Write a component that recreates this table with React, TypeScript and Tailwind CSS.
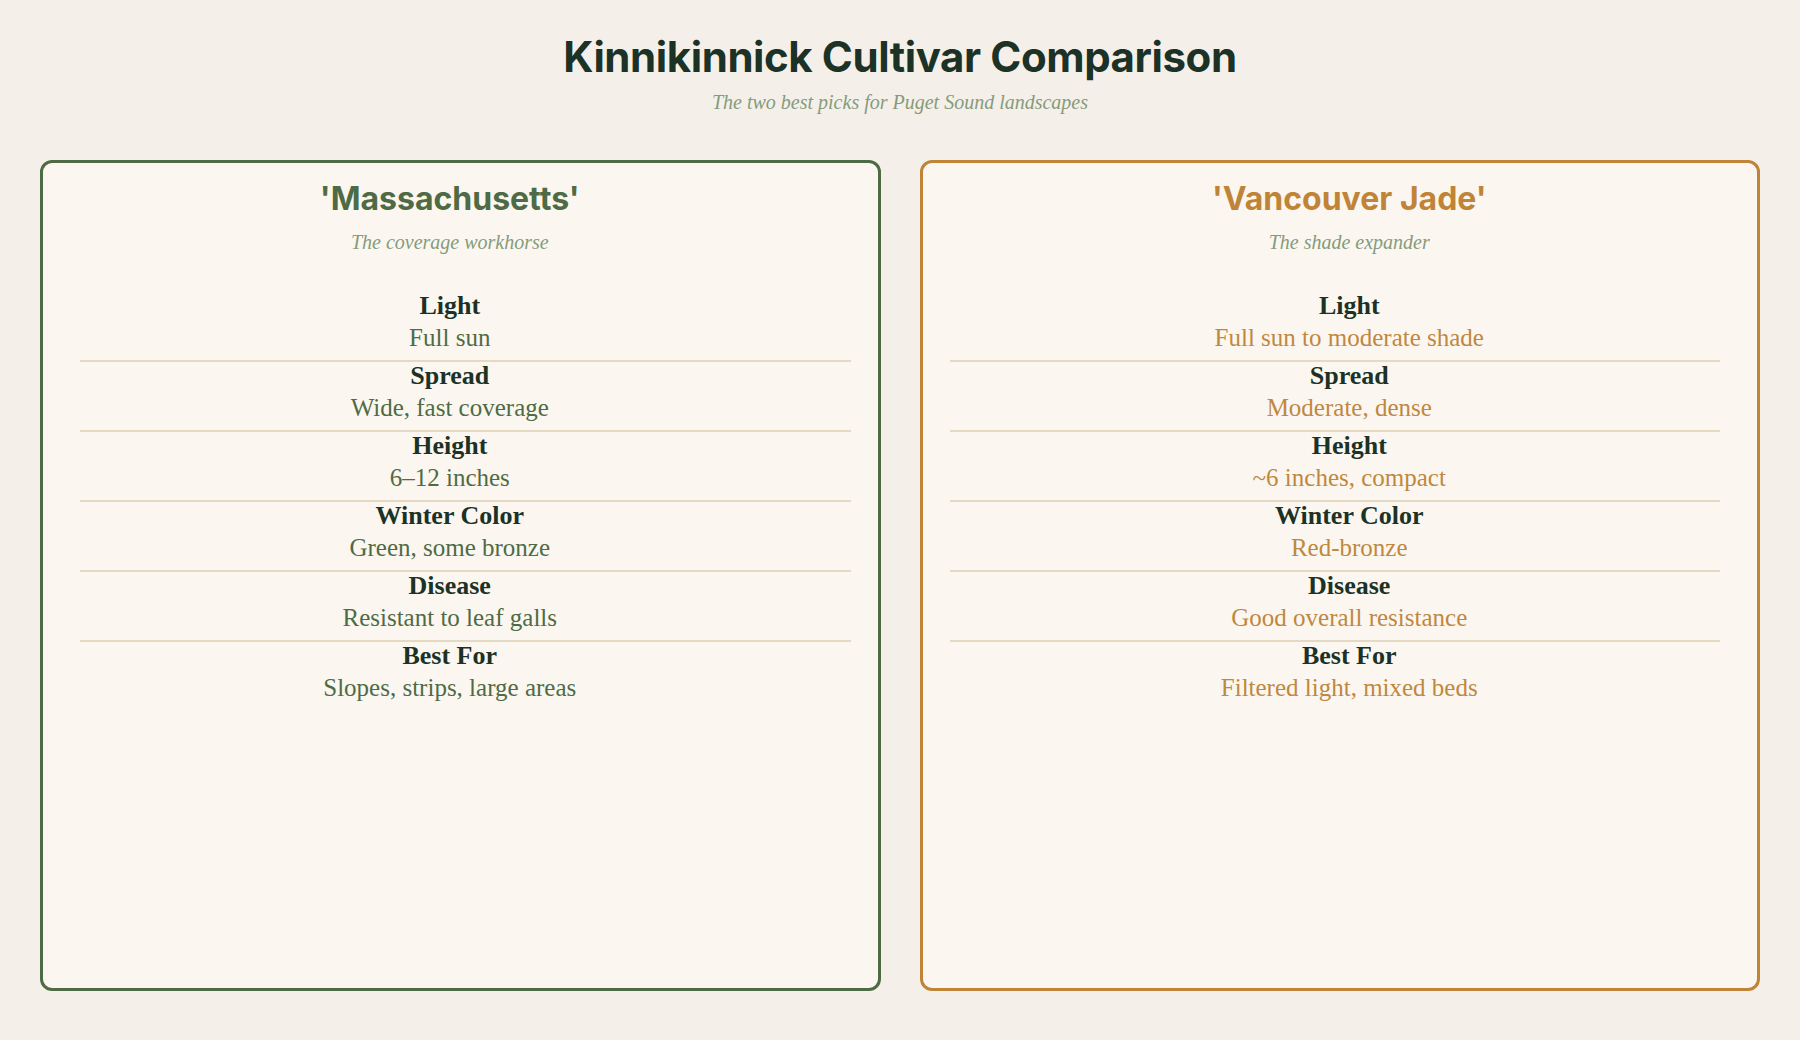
import React from "react";

type Row = { label: string; value: string };

const left: Row[] = [
  { label: "Light", value: "Full sun" },
  { label: "Spread", value: "Wide, fast coverage" },
  { label: "Height", value: "6–12 inches" },
  { label: "Winter Color", value: "Green, some bronze" },
  { label: "Disease", value: "Resistant to leaf galls" },
  { label: "Best For", value: "Slopes, strips, large areas" },
];

const right: Row[] = [
  { label: "Light", value: "Full sun to moderate shade" },
  { label: "Spread", value: "Moderate, dense" },
  { label: "Height", value: "~6 inches, compact" },
  { label: "Winter Color", value: "Red-bronze" },
  { label: "Disease", value: "Good overall resistance" },
  { label: "Best For", value: "Filtered light, mixed beds" },
];

const serif = { fontFamily: '"Liberation Serif", "Times New Roman", serif' };
const sans = { fontFamily: 'Inter, "Liberation Sans", Arial, sans-serif' };

function Card({
  name,
  tagline,
  rows,
  side,
}: {
  name: string;
  tagline: string;
  rows: Row[];
  side: "left" | "right";
}) {
  const isLeft = side === "left";
  return (
    <div
      className={
        isLeft
          ? "rounded-xl border-[3px] border-[#4e6b45] bg-[#fbf7f0] pl-[37px] pr-[27px] pt-[16px]"
          : "rounded-xl border-[3px] border-[#c08438] bg-[#fbf7f0] pl-[27px] pr-[37px] pt-[16px]"
      }
    >
      <div className={isLeft ? "pr-[31px] text-center" : "pl-[29px] text-center"}>
        <div
          style={sans}
          className={
            isLeft
              ? "text-[32px] leading-[40px] font-bold tracking-[0em] text-[#4e6b45]"
              : "text-[32px] leading-[40px] font-bold tracking-[0em] text-[#c08438]"
          }
        >
          {name}
        </div>
        <div style={serif} className="mt-[9px] text-[20px] leading-[28px] italic text-[#859b7c]">
          {tagline}
        </div>
      </div>
      <div className="mt-[36px] flex flex-col">
        {rows.map((r, i) => (
          <div
            key={r.label}
            className={
              i < rows.length - 1
                ? "border-b-2 border-[#e4dac3] pb-[5px]"
                : "pb-[5px]"
            }
          >
            <div className={isLeft ? "pr-[31px] text-center" : "pl-[29px] text-center"} style={serif}>
              <div className="text-[26px] leading-[28px] font-bold text-[#1c3226]">{r.label}</div>
              <div
                className={
                  isLeft
                    ? "text-[25px] leading-[35px] text-[#4f6b45]"
                    : "text-[25px] leading-[35px] text-[#c0883f]"
                }
              >
                {r.value}
              </div>
            </div>
          </div>
        ))}
      </div>
    </div>
  );
}

export default function App() {
  return (
    <div className="flex h-screen w-full flex-col bg-[#f4f0e9]">
      <header className="pt-[33px] text-center">
        <h1
          style={sans}
          className="text-[42px] leading-[48px] font-bold tracking-[-0.01em] text-[#1c3226]"
        >
          Kinnikinnick Cultivar Comparison
        </h1>
        <p style={serif} className="mt-[7px] text-[20px] leading-[28px] italic text-[#859b7c]">
          The two best picks for Puget Sound landscapes
        </p>
      </header>
      <main className="grid flex-1 grid-cols-2 gap-[39px] px-[40px] pt-[44px] pb-[49px]">
        <Card name="'Massachusetts'" tagline="The coverage workhorse" rows={left} side="left" />
        <Card name="'Vancouver Jade'" tagline="The shade expander" rows={right} side="right" />
      </main>
    </div>
  );
}
